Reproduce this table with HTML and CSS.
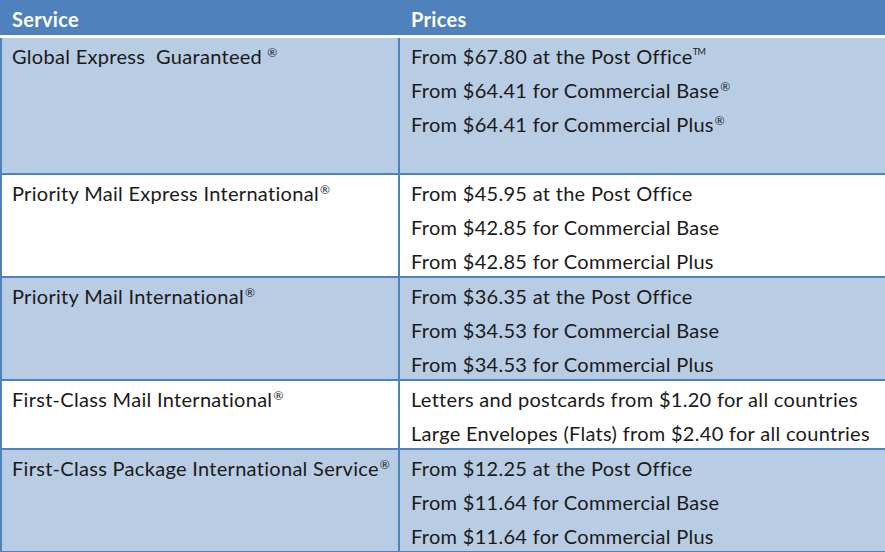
FILE: index.html
```html
<!DOCTYPE html>
<html>
<head>
<meta charset="utf-8">
<link rel="stylesheet" href="styles.css">
</head>
<body>
<table class="rates">
  <colgroup>
    <col class="c-service">
    <col class="c-prices">
  </colgroup>
  <thead>
    <tr>
      <th>Service</th>
      <th class="h-prices">Prices</th>
    </tr>
  </thead>
  <tbody>
    <tr class="shaded tall">
      <td class="service">Global Express&nbsp; Guaranteed<sup class="mark gap">®</sup></td>
      <td class="prices">
        <div>From $67.80 at the Post Office<sup class="tm">TM</sup></div>
        <div>From $64.41 for Commercial Base<sup class="mark">®</sup></div>
        <div>From $64.41 for Commercial Plus<sup class="mark">®</sup></div>
      </td>
    </tr>
    <tr>
      <td class="service">Priority Mail Express International<sup class="mark">®</sup></td>
      <td class="prices">
        <div>From $45.95 at the Post Office</div>
        <div>From $42.85 for Commercial Base</div>
        <div>From $42.85 for Commercial Plus</div>
      </td>
    </tr>
    <tr class="shaded">
      <td class="service">Priority Mail International<sup class="mark">®</sup></td>
      <td class="prices">
        <div>From $36.35 at the Post Office</div>
        <div>From $34.53 for Commercial Base</div>
        <div>From $34.53 for Commercial Plus</div>
      </td>
    </tr>
    <tr>
      <td class="service">First-Class Mail International<sup class="mark">®</sup></td>
      <td class="prices">
        <div>Letters and postcards from $1.20 for all countries</div>
        <div>Large Envelopes (Flats) from $2.40 for all countries</div>
      </td>
    </tr>
    <tr class="shaded last">
      <td class="service">First-Class Package International Service<sup class="mark">®</sup></td>
      <td class="prices">
        <div>From $12.25 at the Post Office</div>
        <div>From $11.64 for Commercial Base</div>
        <div>From $11.64 for Commercial Plus</div>
      </td>
    </tr>
  </tbody>
</table>
</body>
</html>
```
FILE: styles.css
```css
html, body {
  margin: 0;
  padding: 0;
  background: #ffffff;
}
body {
  font-family: Lato, "Liberation Sans", sans-serif;
  color: #1a1a1a;
}
.rates {
  width: 885px;
  border-collapse: separate;
  border-spacing: 0;
  table-layout: fixed;
}
.c-service { width: 400px; }
.rates th {
  background: #4f81bd;
  color: #ffffff;
  font-weight: 700;
  font-size: 20px;
  letter-spacing: 0.3px;
  text-align: left;
  height: 38px;
  padding: 2px 0 0 12px;
  border-bottom: 3px solid #ffffff;
  box-sizing: border-box;
  vertical-align: middle;
}
.rates th.h-prices { padding-left: 11px; }
.rates td {
  vertical-align: top;
  font-size: 20px;
  letter-spacing: 0.3px;
  line-height: 34px;
  padding: 1px 0 0 10px;
  border-bottom: 2px solid #4f81bd;
}
.rates td.service {
  border-left: 2px solid #4f81bd;
  border-right: 2px solid #4f81bd;
}
.rates td.prices { padding-left: 11px; }
.prices div:last-child { margin-bottom: -2px; }
.shaded td { background: #b8cce4; }
.tall td { height: 137px; box-sizing: border-box; }
.mark {
  font-size: 12px;
  line-height: 0;
  vertical-align: 7px;
  margin-left: 1px;
  letter-spacing: 0;
}
.mark.gap { margin-left: 5px; }
.tm {
  font-size: 9px;
  line-height: 0;
  vertical-align: 9px;
  letter-spacing: -0.5px;
}
```
